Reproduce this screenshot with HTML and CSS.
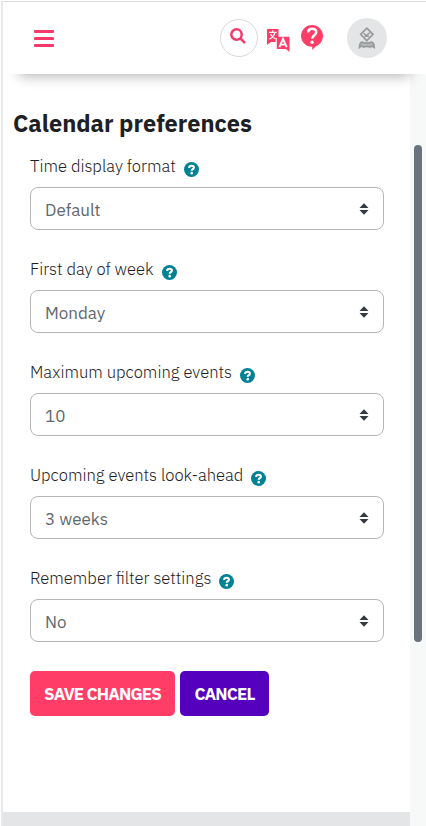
FILE: index.html
```html
<!DOCTYPE html>
<html lang="en">
<head>
	<meta charset="UTF-8">
	<title>Calendar preferences</title>
	<link rel="stylesheet" href="styles.css">
</head>
<body>
	<!-- shared icons -->
	<svg class="sprite" width="0" height="0">
		<symbol id="help" viewBox="0 0 14 14">
			<circle cx="7" cy="7" r="7" fill="#008196"/>
			<path d="M4.700 5.500C4.900 4 5.800 3.500 7 3.500c1.400 0 2.300.700 2.300 1.700C9.300 6.600 7.200 6.500 7.200 8.200" fill="none" stroke="#fff" stroke-width="2"/>
			<circle cx="7.200" cy="10.400" r="1.200" fill="#fff"/>
		</symbol>
		<symbol id="sort" viewBox="0 0 10 12">
			<path d="M.5 5 5 .2 9.500 5zM.5 7h9L5 11.800z" fill="#343a40"/>
		</symbol>
	</svg>
	<div class="page">
		<header class="navbar">
			<button class="menu-btn" aria-label="Menu"><span></span><span></span><span></span></button>
			<div class="nav-right">
				<button class="search-btn" aria-label="Search">
					<svg width="16" height="16" viewBox="0 0 16 16" fill="none" stroke="#f43a68" stroke-width="2.500"><circle cx="6.500" cy="6.500" r="5.200"/><path d="M10.300 10.300 15 15"/></svg>
				</button>
				<svg class="lang-icon" width="24" height="24" viewBox="0 0 24 24">
					<path d="M1 1h11.500v9H9.500v4H5l-4 3z" fill="#ff3d67"/>
					<path d="M3 4.300h7.500M6.700 2.600v1.700M9 4.500C8 8 6 10 3.300 11M4.600 6.300c1 2 2.300 3.500 4.700 4.500" fill="none" stroke="#fff" stroke-width="1.200"/>
					<path d="M10.800 8.700h12.700V24L20 21h-9.200z" fill="#ff3d67"/>
					<path d="M13.400 19.200 17 10.800l3.700 8.400M14.600 16.600h4.900" fill="none" stroke="#fff" stroke-width="1.900"/>
				</svg>
				<svg class="ask-icon" width="22" height="26" viewBox="0 0 22 26">
					<path d="M11 0a11 11 0 0 1 11 10.800c0 5-3.300 9.100-7.300 10.700L11.300 25v-3.200C5 21.800 0 17 0 10.800A11 11 0 0 1 11 0z" fill="#ff3d67"/>
					<path d="M7 7.500C7.200 5 8.700 3.800 11 3.800c2.400 0 4.200 1.300 4.200 3.400 0 3-4 3.200-4 6.500" fill="none" stroke="#fff" stroke-width="2.500"/>
					<circle cx="11.100" cy="17.300" r="1.700" fill="#fff"/>
				</svg>
				<div class="avatar">
					<svg width="18" height="22" viewBox="0 0 18 22" fill="none" stroke="#989b9e" stroke-width="1.700">
						<path d="M8.800 1.200 15 7.300 8.800 13.700 2.700 7.300z"/>
						<path d="M5.700 6.300 8.200 8.500 12 5.600M6.500 9.300h4.500" stroke-width="1.400"/>
						<path d="M1.500 20.300c0-3 .5-4.800 2.800-5.100 1.400 1.200 7.300 1.200 8.900 0 2.300.300 3 2.100 3 5.100-1.500-1.300-3-1.300-4.200-.3-2-.8-4.500-.8-6.500 0-1.200-1-2.700-1-4 .3z" fill="#b6b8ba"/>
					</svg>
				</div>
			</div>
		</header>
		<div class="body">
			<div class="main">
				<h2>Calendar preferences</h2>
				<form class="form">
					<div class="field">
						<label for="timeformat">Time display format <svg class="help"><use href="#help"/></svg></label>
						<div class="select-box">
							<select id="timeformat"><option>Default</option></select>
							<svg class="sort"><use href="#sort"/></svg>
						</div>
					</div>
					<div class="field">
						<label for="firstday">First day of week <svg class="help"><use href="#help"/></svg></label>
						<div class="select-box">
							<select id="firstday"><option>Monday</option></select>
							<svg class="sort"><use href="#sort"/></svg>
						</div>
					</div>
					<div class="field">
						<label for="maxevents">Maximum upcoming events <svg class="help"><use href="#help"/></svg></label>
						<div class="select-box">
							<select id="maxevents"><option>10</option></select>
							<svg class="sort"><use href="#sort"/></svg>
						</div>
					</div>
					<div class="field">
						<label for="lookahead">Upcoming events look-ahead <svg class="help"><use href="#help"/></svg></label>
						<div class="select-box">
							<select id="lookahead"><option>3 weeks</option></select>
							<svg class="sort"><use href="#sort"/></svg>
						</div>
					</div>
					<div class="field">
						<label for="persist">Remember filter settings <svg class="help"><use href="#help"/></svg></label>
						<div class="select-box">
							<select id="persist"><option>No</option></select>
							<svg class="sort"><use href="#sort"/></svg>
						</div>
					</div>
					<div class="buttons">
						<button type="button" class="btn save">SAVE CHANGES</button>
						<button type="button" class="btn cancel">CANCEL</button>
					</div>
				</form>
				<footer class="footer"></footer>
			</div>
			<div class="scrollbar"><div class="thumb"></div></div>
		</div>
	</div>
</body>
</html>
```

FILE: styles.css
```css
* {
	box-sizing: border-box;
	padding: 0;
	margin: 0;
}
html, body {
	height: 100%;
	overflow: hidden;
	background: #fff;
}
body {
	font-family: "IBM Plex Sans", Roboto, "Liberation Sans", sans-serif;
	color: #1d2125;
}
button {
	border: 0;
	font-family: inherit;
}
.sprite {
	position: absolute;
}
.page {
	height: 826px;
	margin-top: 1px;
	margin-left: 1px;
	border-top: 1px solid #dedede;
	border-left: 2px solid #e8e9ea;
	display: flex;
	flex-direction: column;
}
.navbar {
	height: 72px;
	flex: none;
	display: flex;
	justify-content: space-between;
	padding: 0 39px 0 31px;
	background: #fff;
	position: relative;
	z-index: 1;
	box-shadow: 0 18px 12px -16px rgba(0, 0, 0, .3);
}
.menu-btn {
	width: 20px;
	margin-top: 28px;
	display: flex;
	flex-direction: column;
	gap: 4px;
	background: none;
}
.menu-btn span {
	width: 20px;
	height: 3px;
	border-radius: 1px;
	background: #f43a68;
}
.nav-right {
	display: flex;
	align-items: flex-start;
}
.search-btn {
	width: 38px;
	height: 38px;
	margin-top: 17px;
	border: 1px solid #d5d9dc;
	border-radius: 50%;
	background: #fff;
	padding: 0 2px 5px 0;
}
.search-btn svg {
	display: block;
	margin: 0 auto;
}
.lang-icon {
	margin: 26px 0 0 8px;
}
.ask-icon {
	margin: 23px 0 0 11px;
}
.avatar {
	width: 40px;
	height: 40px;
	margin: 16px 0 0 24px;
	border-radius: 50%;
	background: #e3e5e6;
	display: flex;
	align-items: center;
	justify-content: center;
}
.body {
	flex: 1;
	display: flex;
}
.main {
	flex: 1;
	display: flex;
	flex-direction: column;
}
h2 {
	margin: 33px 0 0 10px;
	font-size: 23.6px;
	line-height: 32px;
	font-weight: 700;
}
.form {
	flex: 1;
	padding: 15px 26px 0 27px;
}
.field {
	height: 103px;
}
label {
	display: flex;
	align-items: center;
	height: 24px;
	margin-bottom: 9px;
	font-size: 16.6px;
	font-weight: 300;
	white-space: nowrap;
}
.help {
	width: 15px;
	height: 15px;
	margin: 7px 0 0 8px;
}
.select-box {
	position: relative;
}
select {
	display: block;
	width: 100%;
	height: 43px;
	padding: 2px 14px 0;
	border: 1px solid #b4b6b8;
	border-radius: 8px;
	appearance: none;
	background: #fff;
	font-family: inherit;
	font-size: 17px;
	color: #61686f;
}
.sort {
	position: absolute;
	top: 16px;
	right: 15px;
	width: 10px;
	height: 12px;
}
.buttons {
	display: flex;
	gap: 5px;
	padding-top: 2px;
}
.btn {
	height: 45px;
	padding-top: 1px;
	border-radius: 5px;
	color: #fff;
	font-size: 17px;
	font-weight: 700;
	letter-spacing: -.85px;
}
.save {
	width: 145px;
	background: #ff3d67;
}
.cancel {
	width: 89px;
	background: #5400bd;
}
.footer {
	height: 15px;
	background: #e3e5e7;
}
.scrollbar {
	width: 16px;
	padding: 71px 0 0 4px;
	background: #f7f9f9;
}
.thumb {
	width: 8px;
	height: 497px;
	border-radius: 4px;
	background: #6a737b;
}
```
